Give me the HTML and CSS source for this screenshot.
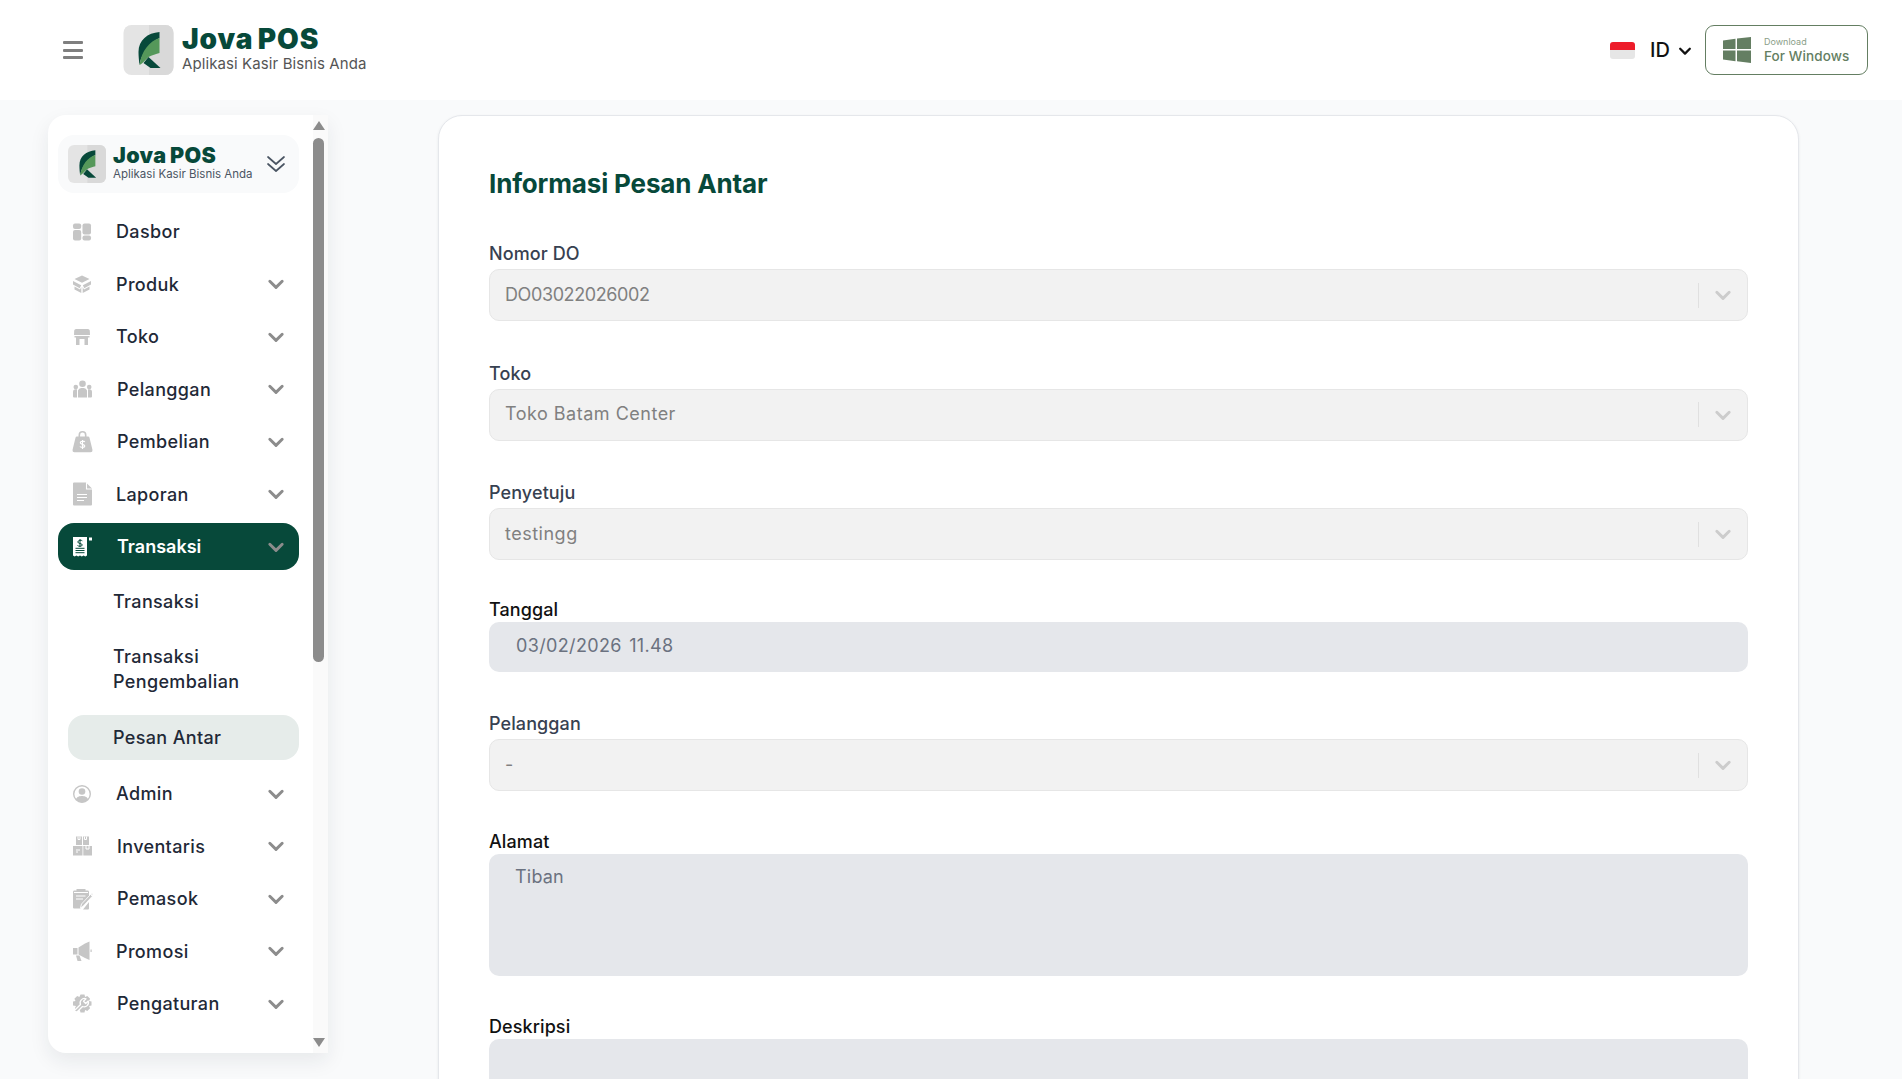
FILE: index.html
```html
<!DOCTYPE html>
<html lang="id">
<head>
<meta charset="utf-8">
<title>Jova POS</title>
<link rel="stylesheet" href="styles.css">
</head>
<body>
<svg class="defs" aria-hidden="true">
  <symbol id="logo" viewBox="0 0 50 50">
    <rect width="50" height="50" rx="8" fill="#e4e4e4"/>
    <path d="M25.500 0H42a8 8 0 0 1 8 8v34a8 8 0 0 1-8 8H25.500z" fill="#d9d9d9"/>
    <path d="M36 7C24 8 15 15 15 27c0 4 .5 9 1 13C18 28 26 18 36 13z" fill="#07493a"/>
    <path d="M36 13C26 16 18 26 16 40c2-1 3-2 4-3l5-5c3-2 8-3 11-4z" fill="#55985a"/>
    <path d="M25 32l12 11H27l-7-5z" fill="#07493a"/>
  </symbol>
  <symbol id="chev" viewBox="0 0 16 16"><path d="M2.500 5.500 8 11l5.500-5.500" fill="none" stroke="currentColor" stroke-width="2.600" stroke-linecap="round" stroke-linejoin="round"/></symbol>
</svg>

<header class="topbar">
  <div class="topbar-left">
    <button class="burger" aria-label="Menu"><span></span><span></span><span></span></button>
    <div class="brand">
      <svg class="brand-logo"><use href="#logo"/></svg>
      <div class="brand-text">
        <div class="brand-name">Jova POS</div>
        <div class="brand-sub">Aplikasi Kasir Bisnis Anda</div>
      </div>
    </div>
  </div>
  <div class="topbar-right">
    <div class="flag"><i></i><i></i></div>
    <div class="lang">ID</div>
    <svg class="lang-chev"><use href="#chev"/></svg>
    <a class="download">
      <svg class="win" viewBox="0 0 28 26"><path d="M0 3.500 12.500 1.700V12H0zM14 1.500 28 0v12H14zM0 13.500h12.500v10.800L0 22.500zM14 13.500h14V26l-14-1.800z" fill="#647e62"/></svg>
      <span class="download-text"><small>Download</small><b>For Windows</b></span>
    </a>
  </div>
</header>

<div class="page">
  <aside class="sidebar">
    <div class="side-scroll">
      <div class="side-brand">
        <svg class="side-logo"><use href="#logo"/></svg>
        <div class="side-brand-text">
          <div class="side-name">Jova POS</div>
          <div class="side-sub">Aplikasi Kasir Bisnis Anda</div>
        </div>
        <svg class="collapse" viewBox="0 0 20 20"><path d="M2 3l8 7 8-7M2 10l8 7 8-7" fill="none" stroke="#4b5563" stroke-width="1.700" stroke-linecap="round" stroke-linejoin="round"/></svg>
      </div>
      <nav class="menu">
        <a class="item">
          <svg class="ico" viewBox="0 0 20 20"><g fill="#c6c6c6"><rect x="1" y="1.500" width="8.200" height="5.500" rx="2"/><rect x="1" y="8" width="8.200" height="10.500" rx="2"/><rect x="10.500" y="1.500" width="8.500" height="11" rx="2"/><rect x="10.500" y="13.500" width="8.500" height="5" rx="2"/></g></svg>
          <span class="label">Dasbor</span>
        </a>
        <a class="item">
          <svg class="ico" viewBox="0 0 20 20"><path fill="#c6c6c6" d="M10 1.500l7.500 3.500L10 8.800 2.500 5zM1 7l8.200 4.200-1.500 3L1 10.500zM19 7l-8.200 4.200 1.500 3 6.700-3.700zM2.500 12.500l5.500 3 1.300-2.500V19l-6.800-3.500zM17.500 12.500l-5.500 3-1.300-2.500V19l6.800-3.500z"/></svg>
          <span class="label">Produk</span>
          <svg class="chev"><use href="#chev"/></svg>
        </a>
        <a class="item">
          <svg class="ico" viewBox="0 0 20 20"><path fill="#c6c6c6" d="M4 2h12a2 2 0 0 1 1.800 1.500L18 8H2l.2-4.500A2 2 0 0 1 4 2zM2.500 9H17.500v1.500H16V18h-3.500v-6h-5v6H4v-7.500H2.500z"/></svg>
          <span class="label">Toko</span>
          <svg class="chev"><use href="#chev"/></svg>
        </a>
        <a class="item">
          <svg class="ico wide" viewBox="0 0 20 20"><g fill="#c6c6c6"><circle cx="10.500" cy="4.800" r="3.300"/><circle cx="3.800" cy="8" r="2.300"/><circle cx="17.200" cy="8" r="2.300"/><path d="M6 11.500A3.500 3.500 0 0 1 9.500 9h2a3.500 3.500 0 0 1 3.500 2.500V18.500H6zM1 13a2.700 2.700 0 0 1 2.700-2.700H5V18.500H2a1 1 0 0 1-1-1zM16 10.300h1.300A2.700 2.700 0 0 1 20 13v4.500a1 1 0 0 1-1 1h-3z"/></g></svg>
          <span class="label">Pelanggan</span>
          <svg class="chev"><use href="#chev"/></svg>
        </a>
        <a class="item">
          <svg class="ico wide" viewBox="0 0 20 20"><path fill="#c6c6c6" d="M6.500 4.500V3a4 4 0 0 1 8 0v1.500h-1.600V3a2.400 2.400 0 0 0-4.800 0v1.500zM5 4.500h11a1.500 1.500 0 0 1 1.500 1.200l3 12.300a2 2 0 0 1-2 2.200H2.500a2 2 0 0 1-2-2.200l3-12.300A1.500 1.500 0 0 1 5 4.500z"/><path d="M12.800 10c-.6-1-4.500-1.300-4.500.7 0 2.200 4.500 1 4.500 3.300 0 1.900-4 1.700-4.900.5M10.500 8v9" stroke="#fff" stroke-width="1.200" fill="none"/></svg>
          <span class="label">Pembelian</span>
          <svg class="chev"><use href="#chev"/></svg>
        </a>
        <a class="item">
          <svg class="ico" viewBox="0 0 20 20"><path fill="#c6c6c6" d="M1 -.5a1 1 0 0 1 1-1h12l6 6V20.500a1 1 0 0 1-1 1H2a1 1 0 0 1-1-1z"/><path stroke="#fff" stroke-width="1.100" fill="none" d="M5 10.500h10M5 13.500h10M5 16.500h7M14.500 -1.500v6.500H20"/></svg>
          <span class="label">Laporan</span>
          <svg class="chev"><use href="#chev"/></svg>
        </a>
        <a class="item active">
          <svg class="ico wide" viewBox="0 0 20 20"><path fill="#fff" d="M1 0h14v18.500l-1.700 1-1.700-1-1.800 1-1.800-1-1.800 1-1.800-1-1.700 1L1 18.500zM17 .5h3v3h-3z"/><path d="M3.500 11.300h9M3.500 13.500h9M3.500 15.700h9" stroke="#07493a" stroke-width="1"/><path d="M10.300 3.800C9.800 3 5.800 3 5.800 5c0 2 4.500 1 4.500 3 0 1.600-4 1.500-4.800.5M8 2v8" fill="none" stroke="#07493a" stroke-width="1"/></svg>
          <span class="label">Transaksi</span>
          <svg class="chev"><use href="#chev"/></svg>
        </a>
        <div class="submenu">
          <a class="sub">Transaksi</a>
          <a class="sub long">Transaksi Pengembalian</a>
          <a class="sub current">Pesan Antar</a>
        </div>
        <a class="item">
          <svg class="ico" viewBox="0 0 20 20"><circle cx="10" cy="10" r="8.300" fill="#fff" stroke="#c6c6c6" stroke-width="1.400"/><circle cx="10" cy="7.500" r="3.300" fill="#c6c6c6"/><path fill="#c6c6c6" d="M3.800 15.500C5 12.500 7.500 12 10 12s5 .5 6.200 3.500A8.300 8.300 0 0 1 10 18.300a8.300 8.300 0 0 1-6.200-2.800z"/></svg>
          <span class="label">Admin</span>
          <svg class="chev"><use href="#chev"/></svg>
        </a>
        <a class="item">
          <svg class="ico wide" viewBox="0 0 20 20"><path fill="#c6c6c6" d="M4 .5h6v8.500H4zM11 .5h6v8.500h-6zM1 10h9.500v9.500H1zM11.300 10H20v9.500h-8.700z"/><path stroke="#fff" stroke-width="1" fill="none" d="M6 .5v3h2v-3M12.500 .5v3h2v-3M4 14h4M4 16h2M14 10v3h3v-3"/></svg>
          <span class="label">Inventaris</span>
          <svg class="chev"><use href="#chev"/></svg>
        </a>
        <a class="item">
          <svg class="ico wide" viewBox="0 0 20 20"><path fill="#c6c6c6" d="M2 1.500h2.500V0h9v1.500H16a1.500 1.500 0 0 1 1 1.500v4l-8 9 -.5 3.500H2a1 1 0 0 1-1-1V3a1.500 1.500 0 0 1 1-1.500zM17 13v6.500a1 1 0 0 1-1 1H11z"/><path stroke="#fff" stroke-width="1.100" fill="none" d="M4 7h9.500M4 10h7M2 3.500h14"/><path d="M8.500 19l1-4L18.500 5.500l1.800 1.800-9 9.700zM19 5l1-1 1 1-1 1.500z" fill="#c6c6c6" stroke="#fff" stroke-width=".8"/></svg>
          <span class="label">Pemasok</span>
          <svg class="chev"><use href="#chev"/></svg>
        </a>
        <a class="item">
          <svg class="ico" viewBox="0 0 20 20"><path fill="#c6c6c6" d="M1 7h4.500v6.500H1zM6.500 6.500 13 2.500 17.500 .5v18.500L13 17l-6.500-3.500zM18.500 8.500h1.200v2.500h-1.200zM4 14.500h3.500L9.500 20H5.500z"/></svg>
          <span class="label">Promosi</span>
          <svg class="chev"><use href="#chev"/></svg>
        </a>
        <a class="item">
          <svg class="ico wide" viewBox="0 0 20 20"><path fill="#c6c6c6" d="M8.500 .5h4l.6 2.400 2.200-1 2.800 2.800-1.100 2.200 2.500.6v4l-2.500.6 1.100 2.200-2.800 2.800-2.200-1-.6 2.400h-4l-.6-2.400-2.200 1-2.800-2.800 1.100-2.200L1 11.500v-4l2.500-.6L2.400 4.700l2.800-2.800 2.200 1z"/><path d="M14 4.800a4.300 4.300 0 0 0-5.500 5.700L2.500 16.500l2 2 6-6a4.300 4.300 0 0 0 5.700-5.500l-2.500 2.500-2.200-2.200z" fill="#c6c6c6" stroke="#fff" stroke-width="1.300" stroke-linejoin="round"/></svg>
          <span class="label">Pengaturan</span>
          <svg class="chev"><use href="#chev"/></svg>
        </a>
      </nav>
    </div>
    <div class="scrollbar">
      <i class="arrow-up"></i>
      <div class="track"><div class="thumb"></div></div>
      <i class="arrow-down"></i>
    </div>
  </aside>

  <main class="card">
    <h1 class="title">Informasi Pesan Antar</h1>
    <div class="field select-field">
      <label>Nomor DO</label>
      <div class="select"><span class="num">DO03022026002</span><i class="sep"></i><svg class="sel-chev"><use href="#chev"/></svg></div>
    </div>
    <div class="field select-field">
      <label>Toko</label>
      <div class="select"><span>Toko Batam Center</span><i class="sep"></i><svg class="sel-chev"><use href="#chev"/></svg></div>
    </div>
    <div class="field select-field tight">
      <label>Penyetuju</label>
      <div class="select"><span>testingg</span><i class="sep"></i><svg class="sel-chev"><use href="#chev"/></svg></div>
    </div>
    <div class="field plain-field">
      <label class="dark">Tanggal</label>
      <div class="input">03/02/2026 11.48</div>
    </div>
    <div class="field select-field even">
      <label>Pelanggan</label>
      <div class="select"><span>-</span><i class="sep"></i><svg class="sel-chev"><use href="#chev"/></svg></div>
    </div>
    <div class="field plain-field">
      <label class="dark">Alamat</label>
      <div class="textarea">Tiban</div>
    </div>
    <div class="field plain-field">
      <label class="dark">Deskripsi</label>
      <div class="textarea"></div>
    </div>
  </main>
</div>
</body>
</html>
```
FILE: styles.css
```css
* { box-sizing: border-box; }
html, body { margin: 0; height: 100%; overflow: hidden; }
body { background: #f9fafb; font-family: Inter, "Noto Sans", sans-serif; color: #1f2937; }
.defs { display: none; }

.topbar { height: 100px; background: #fff; display: flex; align-items: center; justify-content: space-between; padding: 0 34px 0 63px; }
.topbar-left { display: flex; align-items: center; }
.burger { width: 20px; height: 18px; padding: 0; border: 0; background: none; display: flex; flex-direction: column; justify-content: space-between; margin-right: 40px; }
.burger span { display: block; height: 3px; background: #7f7f7f; border-radius: 1px; }
.brand { display: flex; align-items: center; gap: 8px; }
.brand-logo { width: 51px; height: 50px; }
.brand-text { display: flex; flex-direction: column; margin-bottom: 2px; }
.brand-name { font-size: 28px; line-height: 30px; font-weight: 900; color: #07493a; letter-spacing: .9px; word-spacing: -2px; }
.brand-sub { font-size: 15px; line-height: 20px; color: #555; letter-spacing: .1px; }

.topbar-right { display: flex; align-items: center; }
.flag { width: 25px; height: 17px; border-radius: 3px; overflow: hidden; display: flex; flex-direction: column; margin-right: 15px; }
.flag i { flex: 1; background: #ed1c2a; }
.flag i + i { background: #e6e6e6; }
.lang { font-size: 20px; font-weight: 500; color: #111; }
.lang-chev { width: 14px; height: 14px; margin: 2px 0 0 8px; color: #111; }
.download { width: 163px; height: 50px; margin-left: 13px; border: 1px solid #647e62; border-radius: 9px; display: flex; align-items: center; padding-left: 17px; gap: 13px; }
.win { width: 28px; height: 26px; }
.download-text { display: flex; flex-direction: column; color: #647e62; }
.download-text small { font-size: 9px; line-height: 11px; color: #8a9e88; }
.download-text b { font-size: 13.500px; line-height: 18px; font-weight: 500; letter-spacing: .1px; }

.page { display: flex; align-items: flex-start; padding: 15px 0 0 48px; }
.sidebar { width: 280px; height: 938px; flex: none; background: #fff; border-radius: 18px 0 0 18px; box-shadow: 0 8px 20px rgba(31,41,55,.08); display: flex; overflow: hidden; }
.side-scroll { width: 265px; flex: none; padding: 20px 0 0 10px; }
.side-brand { width: 241px; height: 58px; background: #f9fafb; border-radius: 16px; display: flex; align-items: center; padding-left: 10px; }
.side-logo { width: 38px; height: 38px; flex: none; }
.side-brand-text { margin: 0 0 4px 7px; width: 147px; }
.side-name { font-size: 21.500px; line-height: 24px; font-weight: 900; color: #07493a; letter-spacing: .35px; word-spacing: -1px; }
.side-sub { font-size: 11.500px; line-height: 14.500px; color: #4b5563; white-space: nowrap; }
.collapse { width: 20px; height: 20px; margin-left: 6px; }

.menu { margin-top: 15px; width: 241px; display: flex; flex-direction: column; }
.item { height: 47px; margin-bottom: 5.500px; border-radius: 16px; display: flex; align-items: center; padding: 0 14px; color: #1f2937; font-size: 18px; font-weight: 500; letter-spacing: .35px; }
.ico { width: 20px; height: 20px; flex: none; margin-right: 24px; overflow: visible; }
.ico.wide { margin-right: 25px; }
.label { flex: 1; }
.chev { width: 18px; height: 18px; color: #8c8c8c; }
.item.active { background: #07493a; color: #fff; font-weight: 600; letter-spacing: 0; margin-bottom: 9px; }
.submenu { display: flex; flex-direction: column; margin-bottom: 10.500px; }
.sub { padding: 10px 0 0 55px; font-size: 18px; line-height: 25px; font-weight: 500; color: #1f2937; letter-spacing: .35px; height: 45px; margin-bottom: 10px; }
.sub.long { height: 71px; margin-bottom: 9.500px; width: 225px; }
.sub.current { margin: 0 0 0 10px; width: 231px; padding-left: 45px; background: #e6ecea; border-radius: 16px; }

.scrollbar { width: 15px; flex: none; background: #fafafa; display: flex; flex-direction: column; align-items: center; padding-right: 4px; }
.track { flex: 1; width: 11px; padding-top: 8px; }
.thumb { width: 11px; height: 524px; background: #8c8c8c; border-radius: 6px; }
.arrow-up, .arrow-down { display: block; width: 0; height: 0; border-left: 6.500px solid transparent; border-right: 6.500px solid transparent; }
.arrow-up { margin-top: 6px; border-bottom: 9px solid #8c8c8c; }
.arrow-down { margin-bottom: 6px; border-top: 9px solid #8c8c8c; }

.card { width: 1361px; margin-left: 110px; height: 1100px; background: #fff; border: 1px solid #e5e7eb; border-radius: 24px; padding: 50px 50px 0; box-shadow: 0 1px 3px rgba(31,41,55,.08); flex: none; }
.title { margin: 0 0 41px; font-size: 26px; line-height: 36px; font-weight: 700; color: #07493a; letter-spacing: -.15px; }
.field label { display: block; font-size: 18px; line-height: 22px; font-weight: 500; color: #374151; letter-spacing: .1px; }
.field label.dark { color: #111; line-height: 20px; margin-bottom: 2px; }
.select-field { margin-bottom: 41.500px; }
.select-field label { margin-bottom: 4px; }
.plain-field { margin-bottom: 41px; }
.select-field.tight { margin-bottom: 40px; }
.select-field.even { margin-bottom: 41px; }
.select { height: 52px; background: #f2f2f2; border: 1px solid #e6e6e6; border-radius: 10px; display: flex; align-items: center; padding: 0 15px; font-size: 18px; color: #808080; letter-spacing: .5px; }
.select span { flex: 1; margin-bottom: 2px; }
.select .num { letter-spacing: -.4px; }
.sep { width: 1px; height: 25px; background: #e0e0e0; margin-right: 15px; }
.sel-chev { width: 18px; height: 18px; color: #cccccc; }
.input { height: 50px; background: #e5e7eb; border-radius: 10px; padding: 0 27px; font-size: 18px; line-height: 48px; color: #6b7280; letter-spacing: .35px; word-spacing: 2px; }
.textarea { height: 122px; background: #e5e7eb; border-radius: 10px; padding: 11px 26px; font-size: 18px; line-height: 24px; color: #6b7280; letter-spacing: .2px; }
```
